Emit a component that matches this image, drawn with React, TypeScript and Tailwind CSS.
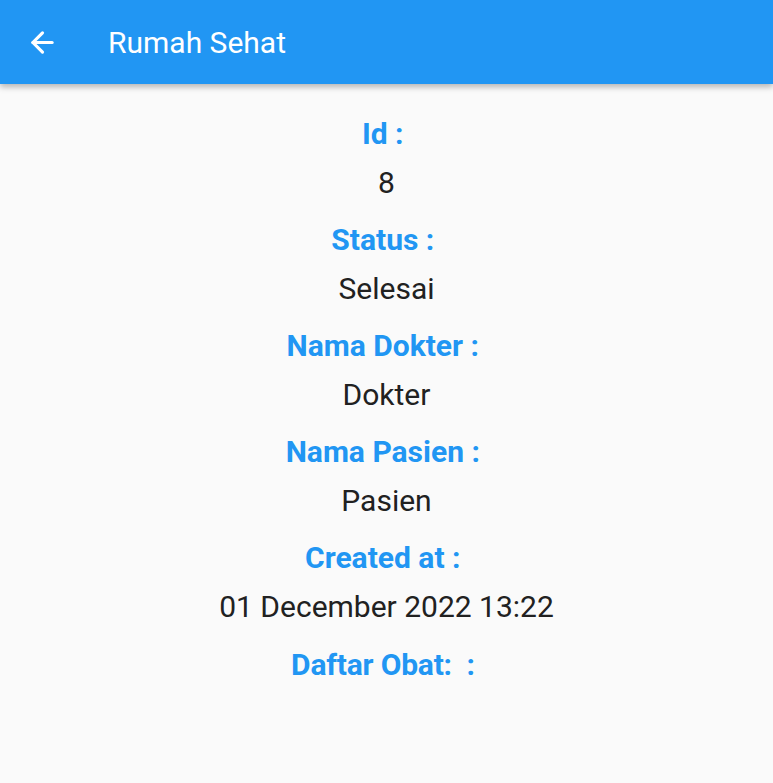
import { ArrowLeft } from 'lucide-react'

const rows = [
  { label: 'Id : ', value: '8' },
  { label: 'Status : ', value: 'Selesai' },
  { label: 'Nama Dokter : ', value: 'Dokter' },
  { label: 'Nama Pasien : ', value: 'Pasien' },
  { label: 'Created at : ', value: '01 December 2022 13:22' },
]

export default function App() {
  return (
    <div className="min-h-[783px] bg-[#fafafa]" style={{ fontFamily: 'Roboto, sans-serif' }}>
      <header className="relative z-10 flex h-[84px] items-center bg-[#2196f3] shadow-[0_3px_6px_rgba(0,0,0,0.28)]">
        <div className="flex w-[108px] items-center pl-[26px] pt-[1px]">
          <ArrowLeft className="h-[33px] w-[33px] text-white" strokeWidth={2.3} />
        </div>
        <h1 className="pt-[2px] text-[30px] leading-none text-white">Rumah Sehat</h1>
      </header>

      <main className="flex flex-col items-center pt-[32px]">
        {rows.map((row, i) => (
          <div key={i} className={`flex flex-col items-center ${i > 0 ? 'mt-[22px]' : ''}`}>
            <div className="whitespace-pre text-[30px] font-bold leading-[35px] text-[#2196f3]">{row.label}</div>
            <div className="mt-[14px] text-[30px] leading-[35px] text-[#212121]">{row.value}</div>
          </div>
        ))}
        <div className="mt-[23px] whitespace-pre text-[30px] font-bold leading-[35px] tracking-[-0.2px] text-[#2196f3]">
          {'Daftar Obat:  : '}
        </div>
      </main>
    </div>
  )
}
